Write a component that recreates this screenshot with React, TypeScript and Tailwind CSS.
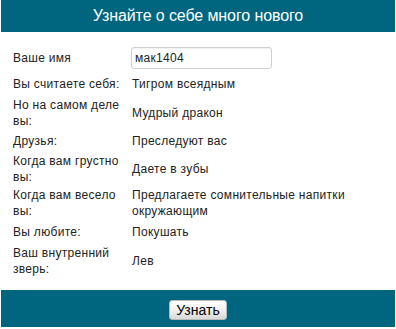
import React from "react";

const rows: { label: string; value: React.ReactNode; pad?: string }[] = [
    { label: "Вы считаете себя:", value: "Тигром всеядным" },
    { label: "Но на самом деле вы:", value: "Мудрый дракон", pad: "pt-[2px] pb-[2px]" },
    { label: "Друзья:", value: "Преследуют вас" },
    { label: "Когда вам грустно вы:", value: "Даете в зубы", pad: "pt-[1px] pb-0" },
    {
        label: "Когда вам весело вы:",
        value: "Предлагаете сомнительные напитки окружающим",
    },
    { label: "Вы любите:", value: "Покушать" },
    { label: "Ваш внутренний зверь:", value: "Лев" },
];

export default function App() {
    return (
        <div
            className="w-[396px] h-[329px] bg-white px-px pb-[2px] flex flex-col text-[#222]"
            style={{ fontFamily: '"Liberation Sans", Arial, sans-serif' }}
        >
            <div className="h-[32px] bg-[#00667f] flex items-center justify-center">
                <span className="text-white text-[16px] font-normal tracking-[-0.1px]">
                    Узнайте о себе много нового
                </span>
            </div>

            <div className="flex-1 pt-[12px] pl-[12px] pr-2 text-[12px] leading-[16px] tracking-[0.3px]">
                <div className="grid grid-cols-[118px_1fr] items-center">
                    <div className="pt-[3px] pb-[5px]">Ваше имя</div>
                    <div className="pt-[3px] pb-[5px]">
                        <input
                            type="text"
                            defaultValue="мак1404"
                            className="w-[141px] h-[22px] border border-[#cfcfcf] rounded-[3px] px-[3px] text-[12px] tracking-[0.3px] text-[#222] outline-none shadow-[inset_0_1px_1px_rgba(0,0,0,0.06)]"
                            style={{ fontFamily: '"Liberation Sans", Arial, sans-serif' }}
                        />
                    </div>
                    {rows.map((row) => (
                        <React.Fragment key={row.label}>
                            <div className={(row.pad ?? "pt-[2px] pb-[3px]") + " pr-1"}>
                                {row.label}
                            </div>
                            <div className={(row.pad ?? "pt-[2px] pb-[3px]") + " pl-[1px] pr-3"}>
                                {row.value}
                            </div>
                        </React.Fragment>
                    ))}
                </div>
            </div>

            <div className="h-[37px] bg-[#00667f] flex items-center justify-center">
                <button className="w-[58px] h-[20px] mt-[2px] rounded-[3px] border border-[#b9b9b9] bg-gradient-to-b from-white via-[#f1f1f1] to-[#d8d8d8] text-[14px] leading-none text-black">
                    Узнать
                </button>
            </div>
        </div>
    );
}
